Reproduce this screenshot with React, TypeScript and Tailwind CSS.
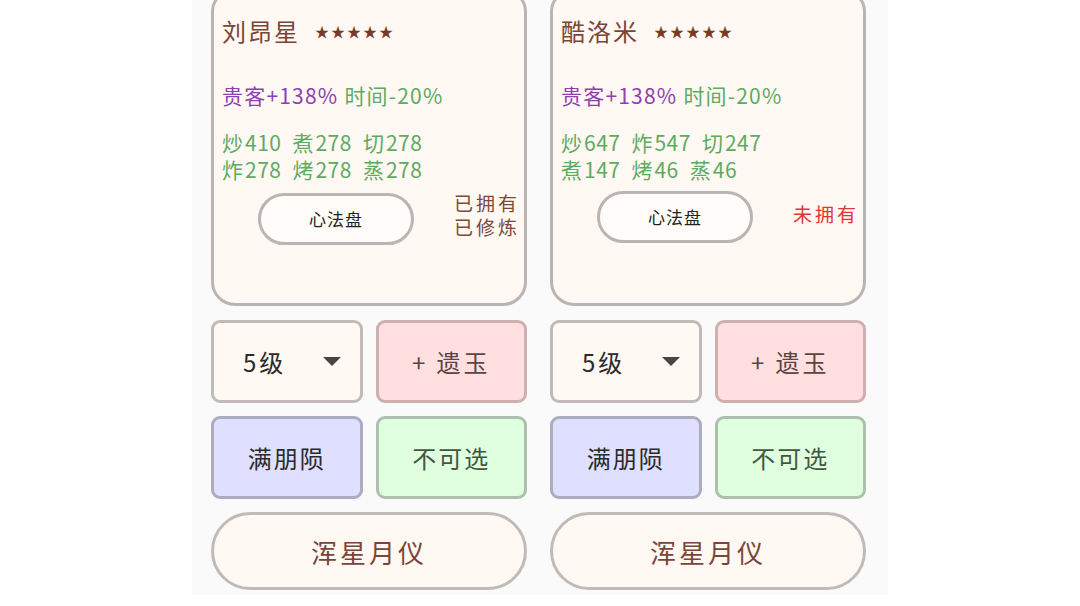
import React from "react";

type Chef = {
  name: string;
  stats: string[];
  owned: boolean;
};

const chefs: Chef[] = [
  { name: "刘昂星", stats: ["炒410 煮278 切278", "炸278 烤278 蒸278"], owned: true },
  { name: "酷洛米", stats: ["炒647 炸547 切247", "煮147 烤46 蒸46"], owned: false },
];

const font = { fontFamily: '"Noto Sans CJK SC", "Noto Sans", sans-serif' };

const StatLine: React.FC<{ text: string }> = ({ text }) => (
  <div className="flex gap-[11px]">
    {text.split(" ").map((s) => (
      <span key={s}>
        {s.slice(0, 1)}
        <span className="ml-[2px] tracking-[0.5px]">{s.slice(1)}</span>
      </span>
    ))}
  </div>
);

const ChefColumn: React.FC<{ chef: Chef }> = ({ chef }) => {
  return (
    <div className="flex flex-col w-[316px]">
      <div className="h-[318px] rounded-[24px] border-[3px] border-[#bcb4b2] bg-[#fff8f3] pt-[25px] pl-[8px] pr-[4px]">
        <div className="flex items-center h-[30px]">
          <span className="text-[24px] tracking-[2px] text-[#7a4537]">{chef.name}</span>
          <span className="ml-[15px] text-[14px] tracking-[2px] text-[#7a3a2a]">★★★★★</span>
        </div>
        <div className="mt-[36px] h-[28px] flex items-center text-[21px] tracking-[1.2px]">
          <span className="text-[#8e3fb2]">贵客+138%</span>
          <span className="ml-[6px] text-[#5dab62]">时间-20%</span>
        </div>
        <div className="mt-[19px] text-[21px] leading-[27px] text-[#5dab62]">
          {chef.stats.map((l) => (
            <StatLine key={l} text={l} />
          ))}
        </div>
        <div className="mt-[8px] flex items-center">
          <button className="ml-[36px] w-[156px] h-[52px] rounded-full border-[3px] border-[#bcb4b2] bg-[#fffcfa] text-[17px] tracking-[1px] text-[#222]">
            心法盘
          </button>
          {chef.owned ? (
            <div className="flex-1 mb-[8px] text-right text-[19px] leading-[24px] tracking-[3px] text-[#7a4a3a]">
              <div>已拥有</div>
              <div>已修炼</div>
            </div>
          ) : (
            <div className="flex-1 mb-[6px] text-right text-[19px] tracking-[3px] text-[#e03535]">未拥有</div>
          )}
        </div>
      </div>

      <div className="mt-[14px] grid grid-cols-2 gap-x-[13px] gap-y-[13px]">
        <div className="h-[83px] rounded-[9px] border-[3px] border-[#c2bab7] bg-[#fff8f3] flex items-center pl-[29px] pr-[19px]">
          <span className="text-[24px] tracking-[3px] text-[#2a2a2a]">5级</span>
          <svg className="ml-auto" width="18" height="9" viewBox="0 0 18 9">
            <path d="M0 0 L18 0 L9 9 Z" fill="#4a4444" />
          </svg>
        </div>
        <div className="h-[83px] rounded-[9px] border-[3px] border-[#cdb0b0] bg-[#ffdfdf] flex items-center justify-center text-[24px] tracking-[3px] text-[#5a4444]">
          + 遗玉
        </div>
        <div className="h-[83px] rounded-[9px] border-[3px] border-[#acacbe] bg-[#dfe0ff] flex items-center justify-center text-[24px] tracking-[2px] text-[#2a2a2a]">
          满朋陨
        </div>
        <div className="h-[83px] rounded-[9px] border-[3px] border-[#adc0ad] bg-[#dfffdf] flex items-center justify-center text-[24px] tracking-[2px] text-[#3f573f]">
          不可选
        </div>
      </div>

      <button className="mt-[13px] h-[78px] rounded-full border-[3px] border-[#c2bab7] bg-[#fff8f3] text-[26px] tracking-[3px] text-[#7a4537]">
        浑星月仪
      </button>
    </div>
  );
};

export default function App() {
  return (
    <div className="w-full h-[606px] bg-white overflow-hidden" style={font}>
      <div className="mx-auto w-[696px] h-[595px] bg-[#fafafa] overflow-hidden">
        <div className="-mt-[12px] flex gap-[23px] pl-[19px] pr-[22px]">
          {chefs.map((c) => (
            <ChefColumn key={c.name} chef={c} />
          ))}
        </div>
      </div>
    </div>
  );
}
